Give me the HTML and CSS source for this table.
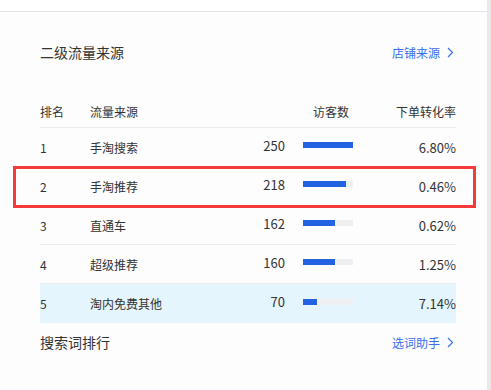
FILE: index.html
```html
<!DOCTYPE html>
<html lang="zh">
<head>
<meta charset="utf-8">
<link rel="stylesheet" href="styles.css">
</head>
<body>
<div class="page">
  <div class="main">
    <div class="top"></div>
    <div class="card">
      <div class="head">
        <div class="title">二级流量来源</div>
        <div class="link">店铺来源 <svg class="chev" width="7" height="11" viewBox="0 0 7 11"><path d="M1 1l4.5 4.5L1 10" fill="none" stroke="#3a6ef2" stroke-width="1.2"/></svg></div>
      </div>
      <div class="table">
        <div class="row thead">
          <div class="c-rank">排名</div>
          <div class="c-src">流量来源</div>
          <div class="c-vis">访客数</div>
          <div class="c-rate">下单转化率</div>
        </div>
        <div class="row">
          <div class="c-rank">1</div>
          <div class="c-src">手淘搜索</div>
          <div class="c-num">250</div>
          <div class="c-bar"><div class="track"><div class="fill" style="width:50px"></div></div></div>
          <div class="c-rate">6.80%</div>
        </div>
        <div class="row mark">
          <div class="c-rank">2</div>
          <div class="c-src">手淘推荐</div>
          <div class="c-num">218</div>
          <div class="c-bar"><div class="track"><div class="fill" style="width:43px"></div></div></div>
          <div class="c-rate">0.46%</div>
          <div class="redbox"></div>
        </div>
        <div class="row">
          <div class="c-rank">3</div>
          <div class="c-src">直通车</div>
          <div class="c-num">162</div>
          <div class="c-bar"><div class="track"><div class="fill" style="width:32px"></div></div></div>
          <div class="c-rate">0.62%</div>
        </div>
        <div class="row">
          <div class="c-rank">4</div>
          <div class="c-src">超级推荐</div>
          <div class="c-num">160</div>
          <div class="c-bar"><div class="track"><div class="fill" style="width:32px"></div></div></div>
          <div class="c-rate">1.25%</div>
        </div>
        <div class="row hl">
          <div class="c-rank">5</div>
          <div class="c-src">淘内免费其他</div>
          <div class="c-num">70</div>
          <div class="c-bar"><div class="track"><div class="fill" style="width:14px"></div></div></div>
          <div class="c-rate">7.14%</div>
        </div>
      </div>
      <div class="head foot">
        <div class="title">搜索词排行</div>
        <div class="link">选词助手 <svg class="chev" width="7" height="11" viewBox="0 0 7 11"><path d="M1 1l4.5 4.5L1 10" fill="none" stroke="#3a6ef2" stroke-width="1.2"/></svg></div>
      </div>
    </div>
  </div>
  <div class="strip"></div>
</div>
</body>
</html>
```
FILE: styles.css
```css
* { box-sizing: border-box; }
html, body { margin: 0; padding: 0; }
body {
  font-family: "Microsoft YaHei", "Noto Sans CJK SC", "Noto Sans", sans-serif;
  color: #333;
  background: #fff;
  width: 491px;
  height: 390px;
  overflow: hidden;
}
.page { display: flex; height: 390px; }
.main { width: 487px; }
.strip { width: 4px; background: #e9e9ec; }
.top { height: 12px; border-bottom: 1px solid #e4e4e6; }
.card { padding: 30px 31px 0 40px; background: #fdfdfd; height: 378px; }
.head { display: flex; justify-content: space-between; align-items: center; height: 20px; }
.title { font-size: 14px; color: #333; line-height: 20px; }
.link { font-size: 12px; color: #3a6ef2; display: flex; align-items: center; gap: 7px; margin-right: 2px; }
.chev { display: block; }
.table { margin-top: 34px; }
.row {
  display: flex;
  align-items: center;
  height: 39px;
  border-bottom: 1px solid #ececee;
  font-size: 12px;
  position: relative;
}
.row:last-child { border-bottom: none; }
.thead { height: 32px; color: #333; }
.c-rank { width: 50px; }
.c-src { flex: 1; }
.c-vis { width: 110px; text-align: right; padding-right: 5px; }
.c-num { width: 60px; text-align: right; font-size: 13px; margin-top: -4px; }
.c-bar { width: 69px; padding-left: 18px; margin-top: -4px; }
.track { width: 50px; height: 6px; background: #efeff1; }
.fill { height: 6px; background: #2362e0; }
.c-rate { width: 102px; text-align: right; font-size: 13px; }
.thead .c-rate { font-size: 12px; }
.hl { background: #e4f5fd; }
.foot { margin-top: 9px; }
.redbox {
  position: absolute;
  left: -27px;
  top: -1px;
  width: 463px;
  height: 42px;
  border: 3px solid #f43a3a;
  pointer-events: none;
}
```
